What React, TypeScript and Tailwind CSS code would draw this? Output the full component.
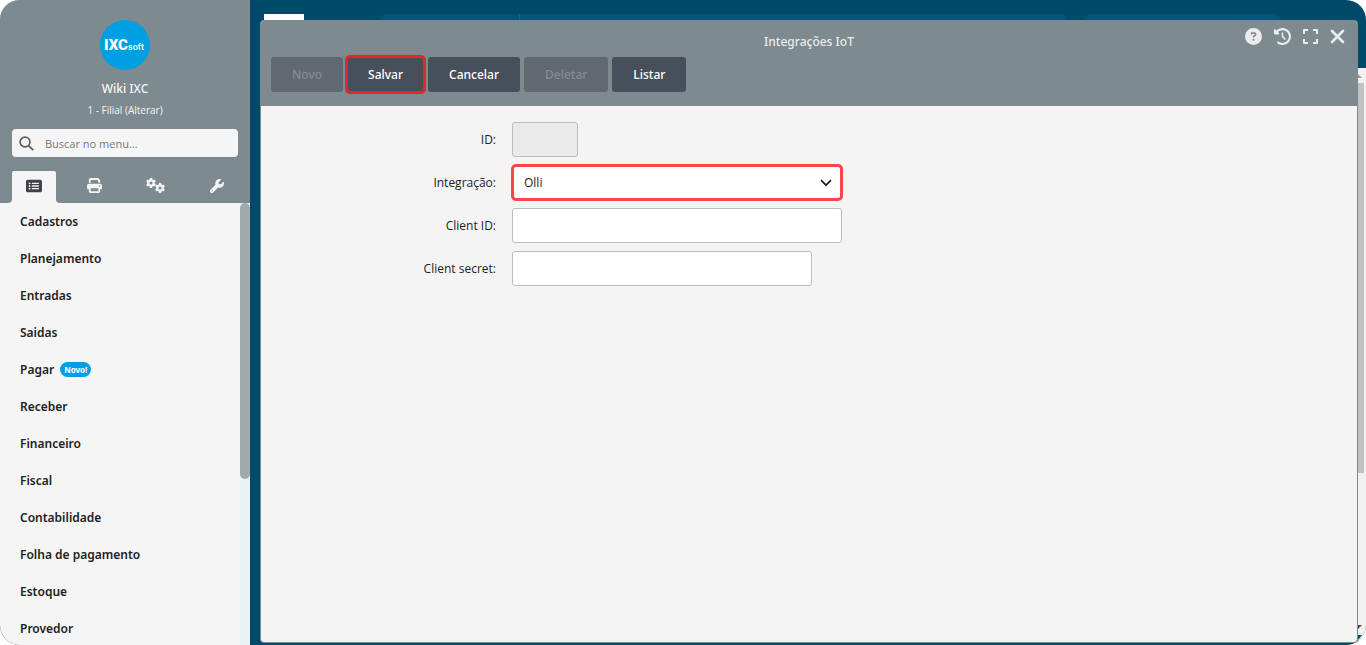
import { useState } from "react";
import {
    FaCircleQuestion,
    FaClockRotateLeft,
    FaGear,
    FaPrint,
    FaRectangleList,
    FaWrench,
} from "react-icons/fa6";

const menuItems = [
    { label: "Cadastros" },
    { label: "Planejamento" },
    { label: "Entradas" },
    { label: "Saidas" },
    { label: "Pagar", badge: "Novo!" },
    { label: "Receber" },
    { label: "Financeiro" },
    { label: "Fiscal" },
    { label: "Contabilidade" },
    { label: "Folha de pagamento" },
    { label: "Estoque" },
    { label: "Provedor" },
];

const actions = [
    { label: "Novo", disabled: true },
    { label: "Salvar", highlighted: true },
    { label: "Cancelar" },
    { label: "Deletar", disabled: true },
    { label: "Listar" },
];

function SidebarTabs() {
    return (
        <nav className="flex h-8 text-[#f5f5f5]" aria-label="Seções">
            <div className="w-3 rounded-br-[4px] bg-[#7d8a8f]" />
            <div className="bg-[#7d8a8f]">
                <button aria-label="Menu" className="flex h-full w-11 items-center justify-center rounded-t-[2px] bg-[#f5f5f5] pb-[2px] text-[#444149]">
                    <FaRectangleList size={16} />
                </button>
            </div>
            <div className="flex flex-1 justify-between rounded-bl-[4px] bg-[#7d8a8f] pr-[11px] pb-[3px] pl-4">
                <button aria-label="Relatórios" className="flex w-11 items-center justify-center">
                    <FaPrint size={15} />
                </button>
                <button aria-label="Configurações" className="flex w-11 items-center justify-center">
                    <span className="flex h-[15px]">
                        <FaGear size={10} />
                        <FaGear size={10} className="-ml-px self-end" />
                    </span>
                </button>
                <button aria-label="Ferramentas" className="flex w-11 items-center justify-center">
                    <FaWrench size={14} />
                </button>
            </div>
        </nav>
    );
}

function Sidebar() {
    return (
        <aside className="flex w-[250px] shrink-0 flex-col bg-[#f5f5f5]">
            <div className="flex flex-col items-center bg-[#7d8a8f] px-3 pt-5 pb-[14px] text-[#f5f5f5]">
                <svg viewBox="0 0 50 50" className="size-[50px]" role="img" aria-label="IXCsoft">
                    <circle cx="25" cy="25" r="25" fill="#009fe3" />
                    <text x="4" y="30" fontSize="15" fontWeight="900" fontFamily="Roboto" fill="#fff">IXC</text>
                    <text x="28" y="30" fontSize="9" fontWeight="500" fontFamily="Roboto" fill="#fff">soft</text>
                </svg>
                <p className="mt-[9px] font-['Noto_Sans',sans-serif] text-[12px] leading-5 font-medium">Wiki IXC</p>
                <a href="#" className="mt-[3px] text-[10px] leading-4">1 - Filial (Alterar)</a>
                <label className="mt-[11px] flex h-7 w-full items-center rounded-[4px] bg-[#f5f5f5] pl-[7px]">
                    <svg viewBox="0 0 15 15" className="size-[15px] shrink-0" fill="none" stroke="#5c5c5c" strokeWidth="1.7">
                        <circle cx="6" cy="6" r="4.9" />
                        <path d="M9.6 9.6 14.2 14.2" />
                    </svg>
                    <input
                        type="text"
                        placeholder="Buscar no menu..."
                        aria-label="Buscar no menu"
                        className="ml-[11px] w-full pt-[2px] text-[11px] text-gray-700 outline-none placeholder:text-[#757575]"
                    />
                </label>
            </div>
            <SidebarTabs />
            <div className="flex min-h-0 flex-1">
                <ul className="flex-1 overflow-hidden font-['Noto_Sans',sans-serif]">
                    {menuItems.map((item) => (
                        <li key={item.label}>
                            <a href="#" className="flex h-[37px] items-center gap-[6px] px-5 text-[12px] font-semibold text-[#222222]">
                                {item.label}
                                {item.badge && (
                                    <span className="rounded-full bg-[#009fe3] px-1 text-[8px] leading-[15px] font-bold text-white">
                                        {item.badge}
                                    </span>
                                )}
                            </a>
                        </li>
                    ))}
                </ul>
                <div className="w-[10px] bg-[#e8f1f5]">
                    <div className="h-[276px] rounded-full bg-[#a0a9ae]" />
                </div>
            </div>
        </aside>
    );
}

function WindowControls() {
    return (
        <div className="flex items-center gap-3 text-[#ececec]">
            <button aria-label="Ajuda">
                <FaCircleQuestion size={17} />
            </button>
            <button aria-label="Histórico">
                <FaClockRotateLeft size={17} />
            </button>
            <button aria-label="Tela cheia">
                <svg viewBox="0 0 15 15" className="size-[15px]" fill="none" stroke="currentColor" strokeWidth="2" strokeLinejoin="round">
                    <path d="M1 5V1H5M10 1H14V5M14 10V14H10M5 14H1V10" />
                </svg>
            </button>
            <button aria-label="Fechar">
                <svg viewBox="0 0 15 15" className="size-[15px]" fill="none" stroke="currentColor" strokeWidth="2.6" strokeLinecap="round">
                    <path d="M2 2 13 13M13 2 2 13" />
                </svg>
            </button>
        </div>
    );
}

function Toolbar() {
    return (
        <div className="flex gap-1 font-['Noto_Sans',sans-serif]">
            {actions.map((action) => (
                <button
                    key={action.label}
                    disabled={action.disabled}
                    className={
                        action.disabled
                            ? "h-[35px] rounded-[3px] bg-[#616872] px-[21px] text-[12px] font-medium text-[#858b95]"
                            : action.highlighted
                              ? "h-[35px] rounded-[3px] border border-[#e3262b] bg-[#47505a] px-5 text-[12px] font-medium text-white ring-2 ring-[#e3262b]"
                              : "h-[35px] rounded-[3px] bg-[#47505a] px-[21px] text-[12px] font-medium text-white"
                    }
                >
                    {action.label}
                </button>
            ))}
        </div>
    );
}

function IntegrationForm() {
    const [integration, setIntegration] = useState("Olli");

    return (
        <form className="grid flex-1 grid-cols-[235px_1fr] content-start items-center gap-x-4 gap-y-2 pt-4 text-[12px] text-[#222222]">
            <label htmlFor="id" className="text-right">ID:</label>
            <input id="id" disabled className="h-[35px] w-[66px] rounded-[3px] border border-[#b8bec4] bg-[#eaeaea] px-[11px]" />

            <label htmlFor="integration" className="text-right">Integração:</label>
            <div className="grid w-[330px] items-center">
                <select
                    id="integration"
                    value={integration}
                    onChange={(e) => setIntegration(e.target.value)}
                    className="col-start-1 row-start-1 h-[35px] appearance-none rounded-[4px] border-2 border-[#fb4548] bg-white px-[10px] ring-1 ring-[#fb4548] outline-none"
                >
                    <option>Olli</option>
                </select>
                <svg viewBox="0 0 12 8" className="pointer-events-none col-start-1 row-start-1 mr-[10px] h-2 w-3 justify-self-end" fill="none" stroke="#222" strokeWidth="1.7">
                    <path d="M1 1.2 6 6.2 11 1.2" />
                </svg>
            </div>

            <label htmlFor="client-id" className="text-right">Client ID:</label>
            <input id="client-id" className="h-[35px] w-[330px] rounded-[3px] border border-[#b8bec4] bg-white px-[11px]" />

            <label htmlFor="client-secret" className="text-right">Client secret:</label>
            <input id="client-secret" className="h-[35px] w-[300px] rounded-[3px] border border-[#b8bec4] bg-white px-[11px]" />
        </form>
    );
}

// Parts of the desktop that stay visible above the open window
function DesktopTop() {
    return (
        <div className="flex h-5 items-end pr-[78px] pl-1">
            <div className="h-[6px] w-10 bg-white" />
            <div className="ml-[76px] flex h-[6px] flex-1 overflow-hidden rounded-t-full bg-[#00547b]">
                <div className="w-[140px] border-r border-[#0c648c]" />
            </div>
            <div className="ml-[18px] h-[6px] w-[196px] rounded-t-full bg-[#00547b]" />
        </div>
    );
}

function PageScrollbar() {
    return (
        <div className="flex w-2 shrink-0 flex-col pt-[68px]">
            <div className="flex flex-1 flex-col bg-[#f1f1f1]">
                <svg viewBox="0 0 8 15" className="h-[15px] w-2">
                    <path d="M0 6 4 10H0Z" fill="#9b9b9b" />
                </svg>
                <div className="h-[390px] w-[6px] bg-[#c1c1c1]" />
                <svg viewBox="0 0 8 20" className="mt-auto h-5 w-2">
                    <path d="M0 0H4L0 4Z" fill="#4b4b4b" />
                    <path d="M0 10H4L0 15Z" fill="#004b6b" />
                </svg>
            </div>
        </div>
    );
}

export default function App() {
    return (
        <div className="h-screen bg-white font-['Open_Sans',sans-serif]">
            <div className="flex h-full overflow-hidden rounded-[20px] bg-[#004a69]">
                <Sidebar />
                <main className="flex min-w-0 flex-1 flex-col pb-[2px] pl-[10px]">
                    <DesktopTop />
                    <section className="flex flex-1 flex-col overflow-hidden rounded-[4px] border border-[#7d8a8f] bg-[#f4f4f4]">
                        <header className="bg-[#7d8a8f] px-[10px] pb-[14px]">
                            <div className="grid h-9 grid-cols-[1fr_auto_1fr] items-start">
                                <h1 className="col-start-2 pt-[11px] font-['Noto_Sans',sans-serif] text-[12px] leading-5 font-medium text-[#ececec]">Integrações IoT</h1>
                                <div className="justify-self-end pt-[7px] pr-[2px]">
                                    <WindowControls />
                                </div>
                            </div>
                            <Toolbar />
                        </header>
                        <IntegrationForm />
                    </section>
                </main>
                <PageScrollbar />
            </div>
        </div>
    );
}
